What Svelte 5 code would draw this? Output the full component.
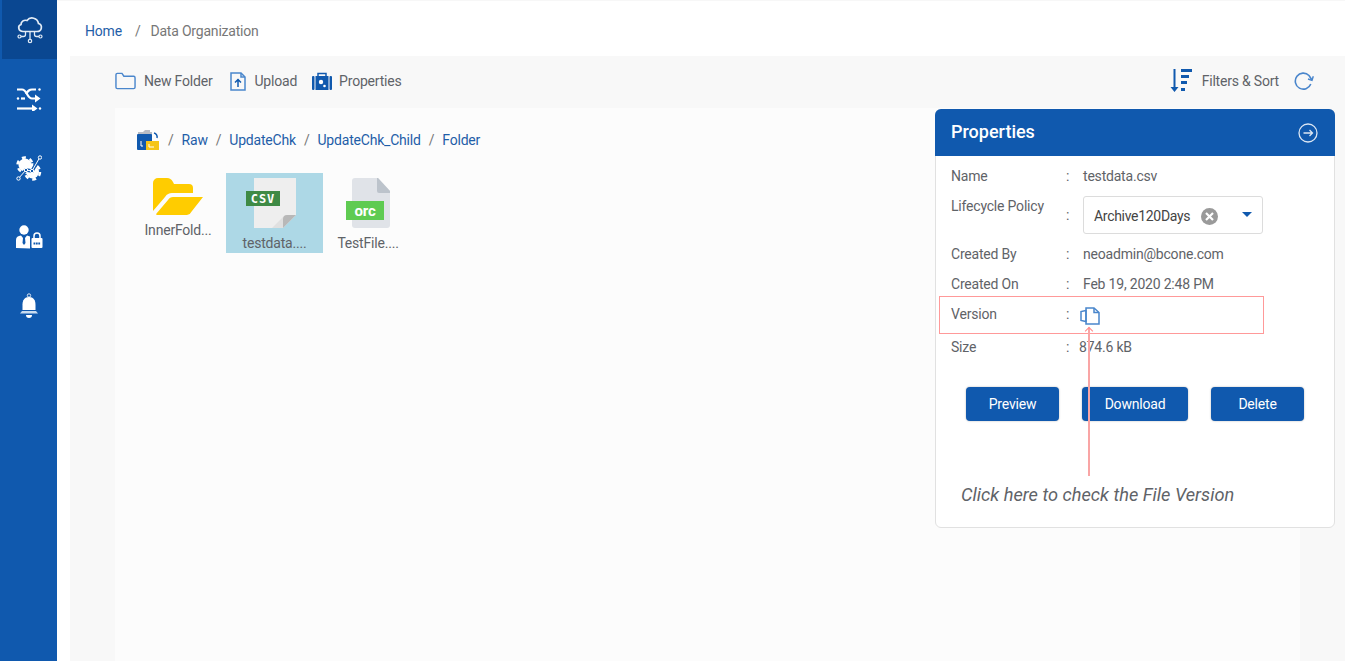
<script>
  const crumbs = ["Raw", "UpdateChk", "UpdateChk_Child", "Folder"];
</script>

<div class="page">
  <nav class="rail">
    <div class="rail-item active">
      <svg width="28" height="28" viewBox="0 0 28 28" fill="none" stroke="#e3ecf6" stroke-width="1.700">
        <path d="M7 15.500H21C26 15.500 27 9 22.500 7.500C21.500 2 14.500 0 11 4.500C7.500 3.500 5 6 5 8.500C1.500 9.500 2 15.500 7 15.500z" />
        <path d="M14 15.500V23M9.500 15.500V18.500a2 2 0 0 1-2 2H5M18.500 15.500V18.500a2 2 0 0 0 2 2H23" stroke-width="1.300" />
        <circle cx="3.500" cy="20.500" r="1.500" stroke-width="1.200" />
        <circle cx="24.500" cy="20.500" r="1.500" stroke-width="1.200" />
        <circle cx="14" cy="25" r="1.700" stroke-width="1.200" />
      </svg>
    </div>
    <div class="rail-item">
      <svg width="26" height="24" viewBox="0 0 26 24" fill="#fff" stroke="#fff">
        <path d="M1 2.500h5c5 0 5 9 10 9h4" fill="none" stroke-width="2.200" />
        <path d="M10 7c2-3 3-4.500 6-4.500h4" fill="none" stroke-width="2.200" />
        <path d="M1 21.500h16" fill="none" stroke-width="2.200" />
        <path d="M19 7.500l5.500 4-5.500 4zM16 17.500l5.500 4-5.500 4z" stroke="none" />
        <circle cx="23.500" cy="2.500" r="1.200" stroke="none" />
        <circle cx="2" cy="11.500" r="1.200" stroke="none" />
        <circle cx="24" cy="21.500" r="1.200" stroke="none" />
        <path d="M5 11.500h4" stroke-width="2.200" />
      </svg>
    </div>
    <div class="rail-item">
      <svg width="26" height="26" viewBox="0 0 26 26" fill="#fff">
        <g transform="translate(9 10)">
          <circle r="6.500" />
          <circle r="7.500" fill="none" stroke="#fff" stroke-width="2.500" stroke-dasharray="4 4" />
        </g>
        <g transform="translate(16.500 17)">
          <circle r="6.500" />
          <circle r="7.500" fill="none" stroke="#fff" stroke-width="2.500" stroke-dasharray="4 4" />
        </g>
        <path d="M2 24L10 15l6 1 8-14" fill="none" stroke="#1059ae" stroke-width="3.500" />
        <path d="M2 24L10 15l6 1 8-14" fill="none" stroke="#fff" stroke-width="1" />
        <circle cx="24" cy="2.500" r="1.700" fill="#1059ae" stroke="#fff" />
        <circle cx="10" cy="15" r="1.700" fill="#1059ae" stroke="#fff" />
        <circle cx="16" cy="16" r="1.700" fill="#1059ae" stroke="#fff" />
        <circle cx="2.500" cy="23.500" r="1.700" fill="#1059ae" stroke="#fff" />
      </svg>
    </div>
    <div class="rail-item">
      <svg width="28" height="24" viewBox="0 0 28 24" fill="#fff">
        <circle cx="9" cy="5" r="4.700" />
        <path d="M1 23v-8c0-3 2-4 5-4.500L8 13l-.5 5 1.500 2 1.500-2-.5-5 2-2.500c1 .2 2 .5 3 1v12z" />
        <path d="M19 13v-2a3 3 0 0 1 6 0v2" fill="none" stroke="#fff" stroke-width="1.500" />
        <rect x="16.500" y="13" width="11" height="10" rx="1" />
        <path d="M18.500 18.500h7" stroke="#1059ae" stroke-width="2" stroke-dasharray="1.800 .6" />
      </svg>
    </div>
    <div class="rail-item">
      <svg width="20" height="26" viewBox="0 0 20 26" fill="#fff">
        <circle cx="10" cy="2.500" r="1.700" fill="none" stroke="#dbe6f3" />
        <path d="M10 4c4.500 0 6.500 3.500 6.500 7.500V17h-13v-5.500C3.500 7.500 5.500 4 10 4z" />
        <path d="M3 18h14l2 2.500H1z" fill="#c9dcef" />
        <path d="M7 22h6a3 3 0 0 1-6 0z" />
      </svg>
    </div>
  </nav>

  <div class="main">
    <header class="crumb-bar">
      <a href="#home">Home</a>
      <span class="sep">/</span>
      <span class="current">Data Organization</span>
    </header>

    <div class="workspace">
      <div class="toolbar">
        <div class="tools">
          <button class="tool">
            <svg width="21" height="18" viewBox="0 0 22 18" fill="none" stroke="#4a86cc" stroke-width="1.500">
              <path d="M1 15V2.500A1.500 1.500 0 0 1 2.500 1h4.800l2 3h10.200A1.500 1.500 0 0 1 21 5.500V15.500a1.500 1.500 0 0 1-1.500 1.500h-17A1.500 1.500 0 0 1 1 15.500z" />
            </svg>
            New Folder
          </button>
          <button class="tool upload">
            <svg width="16" height="19" viewBox="0 0 16 19" fill="none" stroke="#4a86cc" stroke-width="1.500">
              <path d="M1 1h10l4 4v13H1z" />
              <path d="M11 1v4h4" />
              <path d="M8 15V8M5 10.500l3-3 3 3" stroke="#1059ae" />
            </svg>
            Upload
          </button>
          <button class="tool props-tool">
            <svg width="20" height="18" viewBox="0 0 20 18" fill="#1059ae">
              <path d="M6 4V1.500h8V4" fill="none" stroke="#1059ae" stroke-width="1.500" />
              <rect x="0" y="4" width="2.500" height="14" rx="1" />
              <rect x="3.500" y="4" width="13" height="14" />
              <rect x="17.500" y="4" width="2.500" height="14" rx="1" />
              <circle cx="9" cy="10" r="2.200" fill="#fff" />
              <circle cx="12.500" cy="14" r="1.300" fill="#fff" />
            </svg>
            Properties
          </button>
        </div>
        <div class="tools right">
          <button class="tool filters">
            <svg width="22" height="24" viewBox="0 0 22 24" fill="#1059ae">
              <path d="M3.500 0h2v18h3l-4 5-4-5h3z" />
              <rect x="11" y="0" width="11" height="3" />
              <rect x="11" y="6" width="8" height="3" />
              <rect x="11" y="12" width="6" height="3" />
              <rect x="11" y="19" width="4" height="3" />
            </svg>
            Filters &amp; Sort
          </button>
          <svg width="20" height="18" viewBox="0 0 20 18" fill="none" stroke="#4a86cc" stroke-width="1.600">
            <path d="M16.800 12a8 8 0 1 1-1.800-8.500L18 8" />
            <path d="M14 7l4 1.300 1.300-4" stroke-width="1.400" />
          </svg>
        </div>
      </div>

      <div class="content">
        <div class="browser">
          <div class="path">
            <svg width="24" height="22" viewBox="0 0 24 22">
              <path d="M2 3h5l2-2h5v2h2v17H2z" fill="#b8bcc4" />
              <rect x="1" y="5" width="15" height="16" rx="1" fill="#1059ae" />
              <path d="M5 12v5h2" stroke="#fff" fill="none" />
              <rect x="10" y="12" width="13" height="9" fill="#f5c518" />
              <path d="M13 15v3h5" stroke="#fff" fill="none" />
              <path d="M18 4a4 4 0 0 1 3 5" stroke="#1059ae" stroke-width="1.500" fill="none" />
            </svg>
            {#each crumbs as crumb}
              <span class="slash">/</span>
              <a href="#{crumb}">{crumb}</a>
            {/each}
          </div>

          <div class="files">
            <div class="file">
              <svg width="50" height="37" viewBox="0 0 50 37">
                <path d="M0 5a5 5 0 0 1 5-5h9c3 0 4 1 6 4l1 2h15a4 4 0 0 1 4 4v5H19c-3 0-5 1-7 4L0 33z" fill="#ffcc00" />
                <path d="M20 19h30L39 33a7 7 0 0 1-5 4H4c-1 0-1-1-.5-1.500L15 22c1-2 3-3 5-3z" fill="#ffcc00" />
              </svg>
              <span>InnerFold...</span>
            </div>
            <div class="file selected">
              <svg width="57" height="50" viewBox="0 0 57 50">
                <path d="M8 0h42v37L37 50H8z" fill="#eeeeee" />
                <path d="M26 50l11-11V50z" fill="#e0e0e0" />
                <path d="M50 37L37 50V41q0-4 4-4z" fill="#b8b8b8" />
                <rect x="0" y="13" width="34" height="15" fill="#3f8a45" />
                <text x="17" y="24.500" class="csv">CSV</text>
              </svg>
              <span>testdata....</span>
            </div>
            <div class="file">
              <svg width="44" height="50" viewBox="-6 0 44 50">
                <path d="M3 0h23l12 13v34a3 3 0 0 1-3 3H3a3 3 0 0 1-3-3V3a3 3 0 0 1 3-3z" fill="#e0e3e8" />
                <path d="M26 0l12 13v2H27a2 2 0 0 1-2-2V0z" fill="#bcc3cb" />
                <rect x="-6" y="23" width="38" height="19" fill="#5fcb52" />
                <text x="13" y="37.500" class="orc">orc</text>
              </svg>
              <span>TestFile....</span>
            </div>
          </div>
        </div>
      </div>
    </div>
  </div>

  <aside class="panel">
    <div class="panel-head">
      <h2>Properties</h2>
      <svg width="20" height="20" viewBox="0 0 20 20" fill="none" stroke="#dbe6f3" stroke-width="1.300">
        <circle cx="10" cy="10" r="9" />
        <path d="M5.500 10h9M11.500 7l3 3-3 3" />
      </svg>
    </div>
    <div class="props">
      <div class="prop name"><span>Name</span><span>:</span><span>testdata.csv</span></div>
      <div class="prop policy">
        <span class="k">Lifecycle Policy</span><span class="c">:</span>
        <div class="select">
          <span>Archive120Days</span>
          <svg width="17" height="17" viewBox="0 0 17 17">
            <circle cx="8.500" cy="8.500" r="8.500" fill="#9a9a9a" />
            <path d="M5 5l7 7M12 5l-7 7" stroke="#fff" stroke-width="2.200" />
          </svg>
          <i class="caret"></i>
        </div>
      </div>
      <div class="prop"><span>Created By</span><span>:</span><span>neoadmin@bcone.com</span></div>
      <div class="prop"><span>Created On</span><span>:</span><span>Feb 19, 2020 2:48 PM</span></div>
      <div class="prop">
        <span>Version</span><span>:</span>
        <svg class="version-icon" width="20" height="18" viewBox="0 0 20 18" fill="none" stroke="#4a86cc" stroke-width="1.500">
          <path d="M6 3.500L1 4.500v9l5 1z" />
          <path d="M6 1h8l5 4.500V17H6z" />
          <path d="M14 1v4.500h5" />
        </svg>
      </div>
      <div class="prop size"><span>Size</span><span>:</span><span class="size-value">874.6 kB</span></div>
    </div>
    <div class="actions">
      <button>Preview</button>
      <button class="wide">Download</button>
      <button>Delete</button>
    </div>
    <p class="note">Click here to check the File Version</p>

    <div class="highlight"></div>
    <div class="arrow"></div>
  </aside>
</div>

<style>
  :global(body) {
    margin: 0;
    background: #fff;
    font-family: Roboto, "Liberation Sans", sans-serif;
    overflow: hidden;
  }

  .page {
    position: relative;
    display: flex;
    height: 661px;
    width: 1366px;
    overflow: hidden;
    color: #5f6368;
    font-size: 14px;
    letter-spacing: -0.2px;
  }

  .rail {
    width: 57px;
    flex: none;
    background: #1059ae;
    display: flex;
    flex-direction: column;
    gap: 10px;
  }

  .rail-item {
    height: 59px;
    display: flex;
    align-items: center;
    justify-content: center;
  }

  .rail-item.active {
    background: #0a4791;
    margin-left: 2px;
  }

  .main {
    flex: 1;
    min-width: 0;
    margin-right: 21px;
    display: flex;
    flex-direction: column;
  }

  .crumb-bar {
    height: 56px;
    padding: 4px 0 0 28px;
    box-sizing: border-box;
    border-top: 1px solid #f7f7f7;
    display: flex;
    align-items: center;
    gap: 13px;
  }

  a {
    color: #1f5ea8;
    text-decoration: none;
  }

  .sep,
  .current,
  .slash {
    color: #777;
  }

  .current {
    margin-left: -3px;
  }

  .workspace {
    flex: 1;
    margin-left: 13px;
    background: #f8f8f8;
    display: flex;
    flex-direction: column;
  }

  .toolbar {
    height: 52px;
    flex: none;
    box-sizing: border-box;
    padding: 0 31px 2px 45px;
    display: flex;
    align-items: center;
    justify-content: space-between;
  }

  .tools {
    display: flex;
    align-items: center;
    gap: 15px;
  }

  .tool {
    display: flex;
    align-items: center;
    gap: 8px;
    padding: 0;
    border: 0;
    background: none;
    color: #5f6368;
    font: inherit;
    letter-spacing: inherit;
  }

  .upload {
    margin-left: 3px;
  }

  .props-tool {
    gap: 7px;
  }

  .filters {
    gap: 10px;
    margin-left: -1px;
  }

  .content {
    flex: 1;
    padding: 0 45px;
  }

  .browser {
    height: 100%;
    background: #fcfcfc;
    padding: 20px 0 0 15px;
    box-sizing: border-box;
  }

  .path {
    display: flex;
    align-items: center;
    gap: 8px;
    height: 24px;
    padding-left: 6px;
  }

  .files {
    display: grid;
    grid-template-columns: 96px 97px 90px;
    margin-top: 21px;
  }

  .file {
    height: 80px;
    box-sizing: border-box;
    display: flex;
    flex-direction: column;
    align-items: center;
    gap: 6px;
    padding-top: 5px;
    line-height: 18px;
  }

  .file.selected {
    background: #add8e6;
  }

  .csv {
    font: bold 12px "DejaVu Sans Mono", monospace;
    letter-spacing: 1px;
    fill: #fff;
    text-anchor: middle;
  }

  .orc {
    font: bold 15px Roboto, sans-serif;
    fill: #fff;
    text-anchor: middle;
  }

  .panel {
    position: absolute;
    left: 935px;
    top: 109px;
    width: 400px;
    height: 419px;
    box-sizing: border-box;
    background: #fff;
    border: 1px solid #e1e1e1;
    border-radius: 6px;
  }

  .panel-head {
    height: 47px;
    margin: -1px -1px 0;
    padding: 0 17px 0 16px;
    background: #1059ae;
    border-radius: 6px 6px 0 0;
    display: flex;
    align-items: center;
    justify-content: space-between;
    color: #fff;
  }

  h2 {
    margin: -2px 0 0;
    font-size: 18px;
    font-weight: 500;
    letter-spacing: 0;
  }

  .props {
    padding: 0 15px;
  }

  .prop {
    display: grid;
    grid-template-columns: 115px 17px 1fr;
    align-items: center;
    height: 30px;
  }

  .name {
    margin-top: 5px;
  }

  .policy {
    height: 43px;
    margin-top: 5px;
    align-items: start;
  }

  .policy .k {
    line-height: 20px;
  }

  .policy .c {
    margin-top: 11px;
  }

  .select {
    width: 180px;
    height: 38px;
    box-sizing: border-box;
    border: 1px solid #dcdcdc;
    border-radius: 3px;
    display: flex;
    align-items: center;
    padding: 2px 10px 0 10px;
    gap: 11px;
    color: #444;
    letter-spacing: -0.3px;
  }

  .caret {
    margin-left: auto;
    margin-top: -3px;
    border-left: 5px solid transparent;
    border-right: 5px solid transparent;
    border-top: 5px solid #1059ae;
  }

  .version-icon {
    margin: 4px 0 0 -3px;
  }

  .size {
    margin-top: 3px;
  }

  .size-value {
    margin-left: -4px;
  }

  .actions {
    display: flex;
    gap: 23px;
    padding: 25px 0 0 30px;
  }

  .actions button {
    height: 34px;
    width: 93px;
    border: 0;
    border-radius: 4px;
    background: #1059ae;
    color: #fff;
    font: 14px Roboto, sans-serif;
    letter-spacing: inherit;
    box-shadow: 0 0 2px rgba(0, 0, 0, 0.3);
  }

  .actions .wide {
    width: 106px;
  }

  .note {
    margin: 63px 0 0 25px;
    font-size: 18.200px;
    font-style: italic;
    letter-spacing: 0;
  }

  .highlight {
    position: absolute;
    left: 3px;
    top: 186px;
    width: 323px;
    height: 36px;
    border: 1px solid #f99;
  }

  .arrow {
    position: absolute;
    left: 152px;
    top: 218px;
    width: 2px;
    height: 148px;
    background: #f9a5a5;
  }

  .arrow::before {
    content: "";
    position: absolute;
    left: -2px;
    top: 0;
    width: 5px;
    height: 5px;
    border-left: 1px solid #f88;
    border-top: 1px solid #f88;
    transform: rotate(45deg);
  }
</style>
